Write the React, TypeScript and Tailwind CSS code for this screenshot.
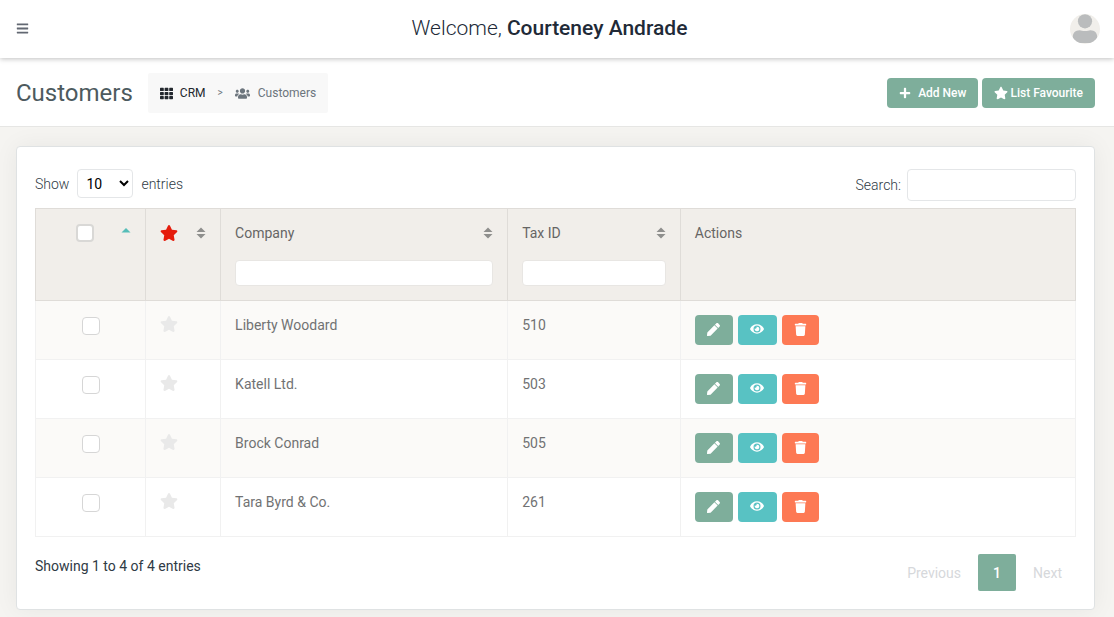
import React, { useState } from "react";
import { FaBars, FaEye, FaPen, FaPlus, FaStar, FaTh, FaTrash, FaUsers } from "react-icons/fa";

type Customer = { company: string; taxId: string };

const customers: Customer[] = [
  { company: "Liberty Woodard", taxId: "510" },
  { company: "Katell Ltd.", taxId: "503" },
  { company: "Brock Conrad", taxId: "505" },
  { company: "Tara Byrd & Co.", taxId: "261" },
];

function SortIcon() {
  return (
    <svg viewBox="0 0 10 12" className="h-3 w-[10px]" fill="#8f8f8d" aria-hidden="true">
      <path d="M5 0.5 9.5 5h-9zM5 11.5 0.5 7h9z" />
    </svg>
  );
}

function SortAscIcon() {
  return (
    <svg viewBox="0 0 10 12" className="h-3 w-[10px]" fill="#56bdb8" aria-hidden="true">
      <path d="M5 1 9.5 5.5h-9z" />
    </svg>
  );
}

function Tick({ label, heavy = false }: { label: string; heavy?: boolean }) {
  return (
    <input
      type="checkbox"
      aria-label={label}
      className={
        heavy
          ? "block size-[18px] appearance-none rounded border-2 border-[#d9d8d6] bg-white checked:bg-[#7eae9b]"
          : "block size-[18px] appearance-none rounded border border-[#d6d6d6] bg-white checked:bg-[#7eae9b]"
      }
    />
  );
}

function Avatar() {
  return (
    <svg viewBox="0 0 30 30" className="size-[30px]" aria-hidden="true">
      <defs>
        <clipPath id="avatar-clip">
          <circle cx="15" cy="15" r="15" />
        </clipPath>
      </defs>
      <circle cx="15" cy="15" r="15" fill="#f1efeb" />
      <g clipPath="url(#avatar-clip)" fill="#babcbd">
        <circle cx="15" cy="7.3" r="7.1" />
        <path d="M9.5 16.2c2 0 2.700.9 5.500.9s3.500-.9 5.500-.9c4 0 6.700 2.800 6.700 6.500 0 3.700-4 6.400-7 6.400H9.800c-3 0-7-2.700-7-6.400 0-3.700 2.700-6.500 6.700-6.500z" />
      </g>
    </svg>
  );
}

function HeaderCell({ title, filter, sortable = true }: { title: string; filter?: boolean; sortable?: boolean }) {
  return (
    <th className="border border-[#dfdcd8] px-[14px] pt-[14px] align-top font-normal">
      <div className="flex h-5 items-center justify-between">
        <span>{title}</span>
        {sortable && (
          <button type="button" aria-label={`Sort by ${title}`}>
            <SortIcon />
          </button>
        )}
      </div>
      {filter && (
        <input
          type="text"
          aria-label={`Filter ${title}`}
          className="mt-[17px] block h-[26px] w-full rounded border border-[#e8e6e3] bg-white px-2"
        />
      )}
    </th>
  );
}

export default function App() {
  const [size, setSize] = useState("10");

  return (
    <div className="min-h-screen bg-[#f5f4f1] font-['Roboto',sans-serif] text-sm text-[#2f3a45]">
      <header className="relative flex h-[58px] items-center justify-between bg-white pr-[14px] pl-4 shadow-[0_1px_5px_rgba(0,0,0,0.25)]">
        <button type="button" aria-label="Toggle menu" className="pb-[2px] text-[#626872]">
          <FaBars size={13} />
        </button>
        <h1 className="pb-[2px] text-[21px] font-light text-[#212a37]">
          Welcome, <strong className="font-medium">Courteney Andrade</strong>
        </h1>
        <button type="button" aria-label="Account">
          <Avatar />
        </button>
      </header>

      <section className="flex min-h-[69px] flex-wrap items-center justify-between gap-3 border-b border-[#e6e6e4] bg-white pt-[2px] pr-[19px] pl-4">
        <div className="flex items-center gap-[15px]">
          <h2 className="text-2xl text-[#4d5a5e]">Customers</h2>
          <nav aria-label="Breadcrumb" className="flex h-10 items-center rounded-xs bg-[#f8f8f8] px-3 text-xs">
            <a href="#crm" className="flex items-center gap-[7px] text-[#23282e]">
              <FaTh size={13} />
              CRM
            </a>
            <span className="mx-3 text-[10px] text-[#6c757d]">&gt;</span>
            <a href="#customers" className="flex items-center gap-2 text-[#6c757d]">
              <FaUsers size={15} />
              Customers
            </a>
          </nav>
        </div>
        <div className="flex gap-1 text-xs font-medium text-white">
          <button type="button" className="flex h-[30px] items-center gap-[7px] rounded bg-[#7eae9b] px-3">
            <FaPlus size={12} />
            Add New
          </button>
          <button type="button" className="flex h-[30px] items-center gap-[2px] rounded bg-[#7eae9b] px-3">
            <FaStar size={14} />
            List Favourite
          </button>
        </div>
      </section>

      <main className="pt-[19px] pr-[19px] pb-[7px] pl-4">
        <div className="rounded border border-[#dfe2e3] bg-white px-[18px] pt-[22px] pb-[18px] shadow-[0_0_24px_rgba(0,0,0,0.06)]">
          <div className="mb-[7px] flex flex-wrap items-start justify-between gap-2 font-light">
            <label className="flex items-center gap-2">
              Show
              <select
                value={size}
                onChange={(e) => setSize(e.target.value)}
                className="h-[29px] w-14 rounded border border-[#e4e6e8] bg-white pl-1 font-normal text-black"
              >
                <option>10</option>
                <option>25</option>
                <option>50</option>
              </select>
              <span>entries</span>
            </label>
            <label className="flex items-center gap-[6px]">
              Search:
              <input type="search" className="h-8 w-[169px] rounded border border-[#e4e6e8] bg-white px-2" />
            </label>
          </div>

          <table className="w-full table-fixed border-collapse text-left text-[#717273]">
            <colgroup>
              <col className="w-[10.6%]" />
              <col className="w-[7.2%]" />
              <col className="w-[27.6%]" />
              <col className="w-[16.6%]" />
              <col className="w-[38%]" />
            </colgroup>
            <thead className="bg-[#f1eeea] text-[#666564]">
              <tr className="h-[92px]">
                <th className="border border-[#dfdcd8] px-[14px] pt-[14px] align-top">
                  <div className="flex h-5 items-center justify-between pl-[26px]">
                    <Tick label="Select all" heavy />
                    <button type="button" aria-label="Sort by selection">
                      <SortAscIcon />
                    </button>
                  </div>
                </th>
                <th className="border border-[#dfdcd8] px-[14px] pt-[14px] align-top">
                  <div className="flex h-5 items-center justify-between">
                    <FaStar size={18} color="#e51c0c" />
                    <button type="button" aria-label="Sort by favourite">
                      <SortIcon />
                    </button>
                  </div>
                </th>
                <HeaderCell title="Company" filter />
                <HeaderCell title="Tax ID" filter />
                <HeaderCell title="Actions" sortable={false} />
              </tr>
            </thead>
            <tbody>
              {customers.map((c) => (
                <tr key={c.taxId} className="h-[59px] odd:bg-[#fbfaf8]">
                  <td className="border border-[#f1f1f1] pt-[14px] align-top">
                    <div className="flex h-[22px] items-center justify-center">
                      <Tick label={`Select ${c.company}`} />
                    </div>
                  </td>
                  <td className="border border-[#f1f1f1] px-[14px] pt-[14px] align-top">
                    <button type="button" aria-label={`Favourite ${c.company}`} className="block text-[#e9e9e9]">
                      <FaStar size={18} />
                    </button>
                  </td>
                  <td className="border border-[#f1f1f1] px-[14px] pt-[14px] align-top">{c.company}</td>
                  <td className="border border-[#f1f1f1] px-[14px] pt-[14px] align-top">{c.taxId}</td>
                  <td className="border border-[#f1f1f1] px-[14px] pt-[14px] align-top">
                    <div className="flex gap-[5px] text-white">
                      <button type="button" aria-label={`Edit ${c.company}`} className="flex h-[30px] w-[38px] items-center justify-center rounded bg-[#7eae9b] pb-[2px]">
                        <FaPen size={13} />
                      </button>
                      <button type="button" aria-label={`View ${c.company}`} className="flex h-[30px] w-[39px] items-center justify-center rounded bg-[#58c2c3] pb-[2px]">
                        <FaEye size={14} />
                      </button>
                      <button type="button" aria-label={`Delete ${c.company}`} className="flex h-[30px] w-[37px] items-center justify-center rounded bg-[#fd7954] pb-[2px]">
                        <FaTrash size={13} />
                      </button>
                    </div>
                  </td>
                </tr>
              ))}
            </tbody>
          </table>

          <div className="mt-[17px] flex flex-wrap items-start justify-between gap-2">
            <p className="pt-[2px]">Showing 1 to 4 of 4 entries</p>
            <nav aria-label="Pagination" className="flex text-[#d6d8db]">
              <button type="button" className="h-[37px] px-[17px]">
                Previous
              </button>
              <button type="button" aria-current="page" className="h-[37px] w-[38px] rounded-xs bg-[#7eae9b] font-medium text-white">
                1
              </button>
              <button type="button" className="h-[37px] pr-[14px] pl-[17px]">
                Next
              </button>
            </nav>
          </div>
        </div>
      </main>
    </div>
  );
}
